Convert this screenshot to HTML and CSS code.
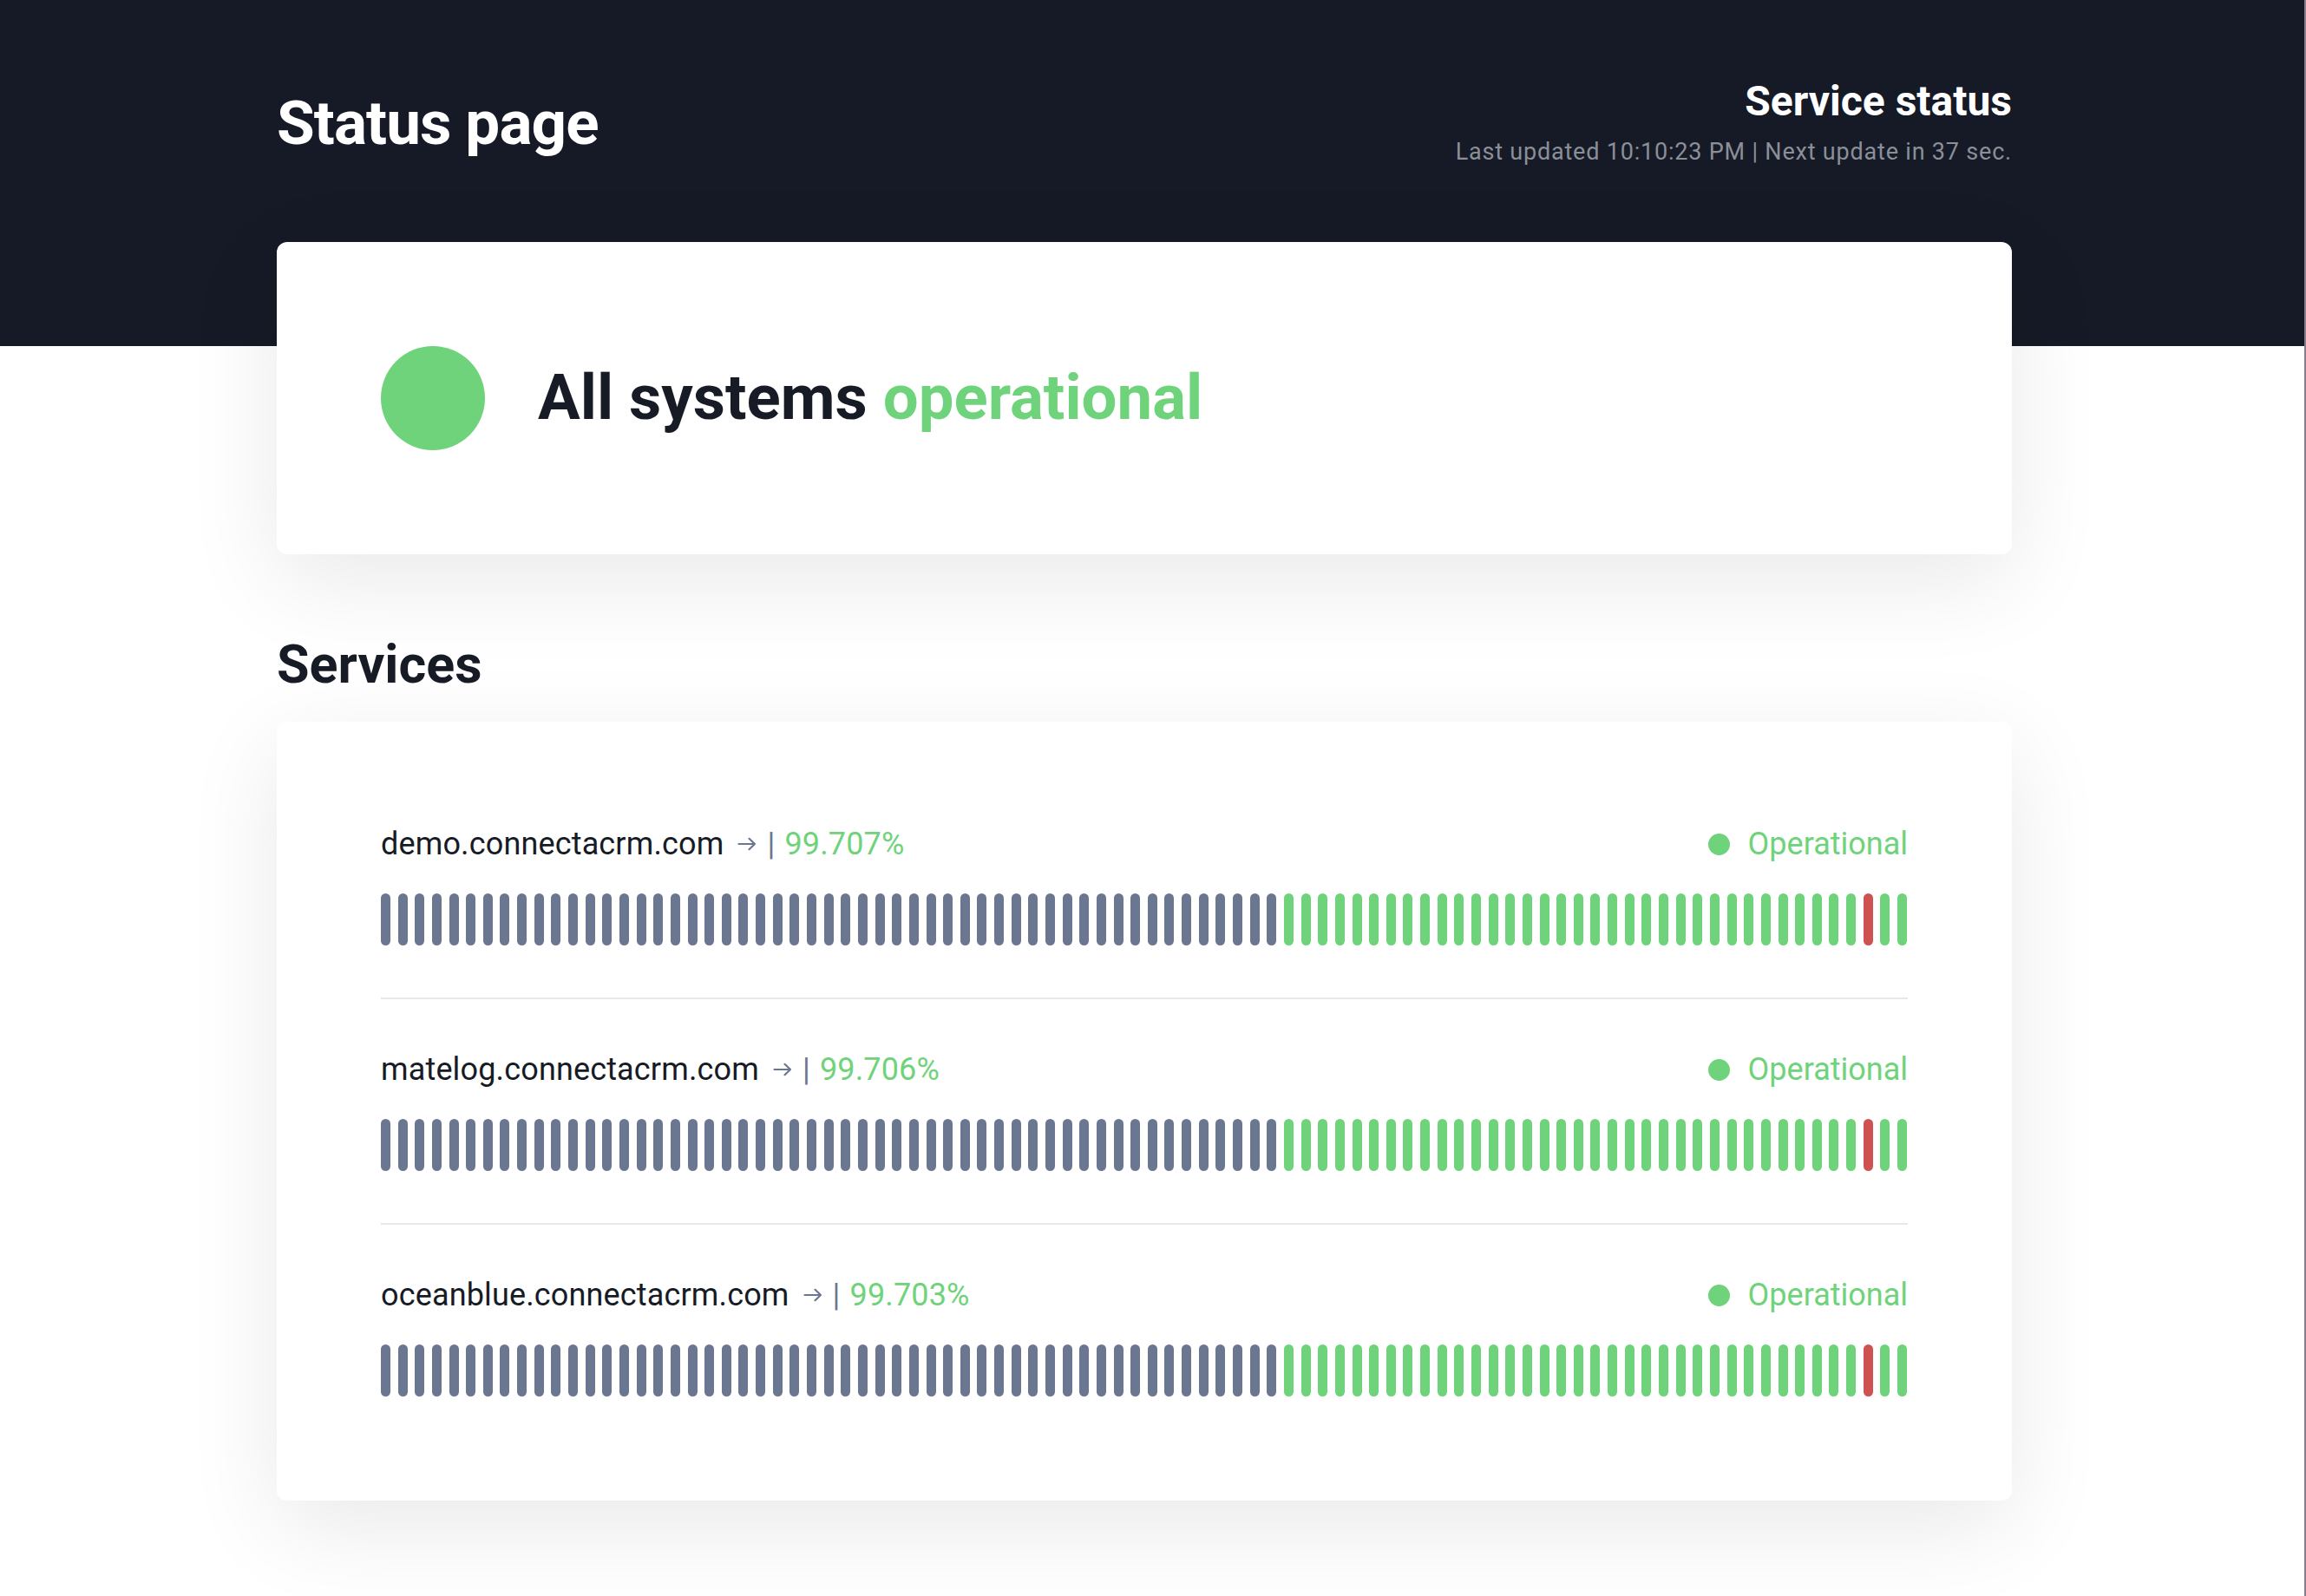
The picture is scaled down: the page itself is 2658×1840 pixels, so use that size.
FILE: index.html
```html
<!DOCTYPE html>
<html lang="en">
<head>
<meta charset="utf-8">
<title>Status page</title>
<link rel="stylesheet" href="styles.css">
</head>
<body>
<header class="top">
  <div class="container top-inner">
    <h1 class="title">Status page</h1>
    <div class="meta">
      <div class="meta-title">Service status</div>
      <div class="meta-sub">Last updated 10:10:23 PM | Next update in 37 sec.</div>
    </div>
  </div>
</header>
<main class="container">
  <section class="card hero">
    <span class="hero-dot"></span>
    <h2 class="hero-text">All systems <span class="green">operational</span></h2>
  </section>

  <h2 class="section-title">Services</h2>

  <section class="card services" id="services">
    <div class="service">
      <div class="service-head">
        <div class="service-name"><span>demo.connectacrm.com</span><svg class="arrow" viewBox="0 0 22 16" width="22" height="16"><path d="M1.5 8h18.5M13.5 1.8l6.5 6.2-6.5 6.2" fill="none" stroke="#6b7690" stroke-width="2.2" stroke-linecap="round" stroke-linejoin="round"/></svg><span class="sep">|</span><span class="green">99.707%</span></div>
        <div class="service-status"><span class="status-dot"></span>Operational</div>
      </div>
      <div class="bars"></div>
    </div>
    <div class="service">
      <div class="service-head">
        <div class="service-name"><span>matelog.connectacrm.com</span><svg class="arrow" viewBox="0 0 22 16" width="22" height="16"><path d="M1.5 8h18.5M13.5 1.8l6.5 6.2-6.5 6.2" fill="none" stroke="#6b7690" stroke-width="2.2" stroke-linecap="round" stroke-linejoin="round"/></svg><span class="sep">|</span><span class="green">99.706%</span></div>
        <div class="service-status"><span class="status-dot"></span>Operational</div>
      </div>
      <div class="bars"></div>
    </div>
    <div class="service">
      <div class="service-head">
        <div class="service-name"><span>oceanblue.connectacrm.com</span><svg class="arrow" viewBox="0 0 22 16" width="22" height="16"><path d="M1.5 8h18.5M13.5 1.8l6.5 6.2-6.5 6.2" fill="none" stroke="#6b7690" stroke-width="2.2" stroke-linecap="round" stroke-linejoin="round"/></svg><span class="sep">|</span><span class="green">99.703%</span></div>
        <div class="service-status"><span class="status-dot"></span>Operational</div>
      </div>
      <div class="bars"></div>
    </div>
  </section>
</main>
<script src="script.js"></script>
</body>
</html>
```

FILE: script.js
```js
document.querySelectorAll('.bars').forEach(function (bars) {
  for (var i = 0; i < 90; i++) {
    var b = document.createElement('span');
    var cls = 'bar';
    if (i < 53) cls += ' bar-none';
    else if (i === 87) cls += ' bar-down';
    else cls += ' bar-up';
    b.className = cls;
    bars.appendChild(b);
  }
});
```

FILE: styles.css
```css
* { box-sizing: border-box; }

html {
  min-height: 100%;
  border-right: 2px solid #877d8b;
  background: #ffffff;
}

body {
  margin: 0;
  min-height: 1840px;
  font-family: Roboto, "Liberation Sans", sans-serif;
  color: #161b26;
  background: #ffffff;
}

.container {
  width: 2000px;
  margin-left: 319px;
}

.top {
  background: #151a26;
  height: 399px;
  padding-top: 88px;
}

.top-inner {
  display: flex;
  justify-content: space-between;
  align-items: center;
}

.title {
  margin: 0;
  font-size: 71px;
  line-height: 86px;
  font-weight: 700;
  color: #ffffff;
  letter-spacing: -0.9px;
}

.meta {
  text-align: right;
}

.meta-title {
  font-size: 48px;
  line-height: 58px;
  font-weight: 700;
  color: #ffffff;
}

.meta-sub {
  margin-top: 10px;
  font-size: 27px;
  line-height: 39px;
  letter-spacing: 0.8px;
  color: #8b8f98;
}

.card {
  background: #ffffff;
  border-radius: 12px;
  box-shadow: 0 30px 110px rgba(0, 0, 0, 0.09);
}

.hero {
  margin-top: -120px;
  padding: 120px;
  display: flex;
  align-items: center;
  gap: 61px;
  position: relative;
}

.hero-dot {
  width: 120px;
  height: 120px;
  border-radius: 50%;
  background: #6fd37b;
  flex: none;
}

.hero-text {
  margin: 0;
  font-size: 72.5px;
  line-height: 86px;
  font-weight: 700;
  color: #161b26;
}

.green { color: #6fd37b; }

.section-title {
  margin: 91px 0 30px;
  font-size: 61px;
  line-height: 72px;
  font-weight: 700;
  color: #161b26;
}

.services {
  padding: 120px;
}

.service {
  padding: 60px 0;
  border-bottom: 2px solid #e6e8ec;
}

.service:first-child { padding-top: 0; }
.service:last-child { padding-bottom: 0; border-bottom: none; }

.service-head {
  display: flex;
  justify-content: space-between;
  align-items: center;
  font-size: 36px;
  line-height: 42px;
}

.service-name {
  color: #161b26;
  display: flex;
  align-items: center;
  letter-spacing: 0.15px;
}

.arrow {
  display: block;
  margin: 0 12px 0 16px;
}

.sep {
  color: #6b7690;
  margin-right: 11px;
}

.service-status {
  display: flex;
  align-items: center;
  color: #6fd37b;
}

.status-dot {
  width: 25px;
  height: 25px;
  border-radius: 50%;
  background: #6fd37b;
  margin-right: 21px;
}

.bars {
  margin-top: 36px;
  height: 60px;
  display: flex;
  justify-content: space-between;
}

.bar {
  width: 11px;
  height: 60px;
  border-radius: 6px;
}

.bar-none { background: #6b7690; }
.bar-up { background: #6fd37b; }
.bar-down { background: #cd5250; }
```
